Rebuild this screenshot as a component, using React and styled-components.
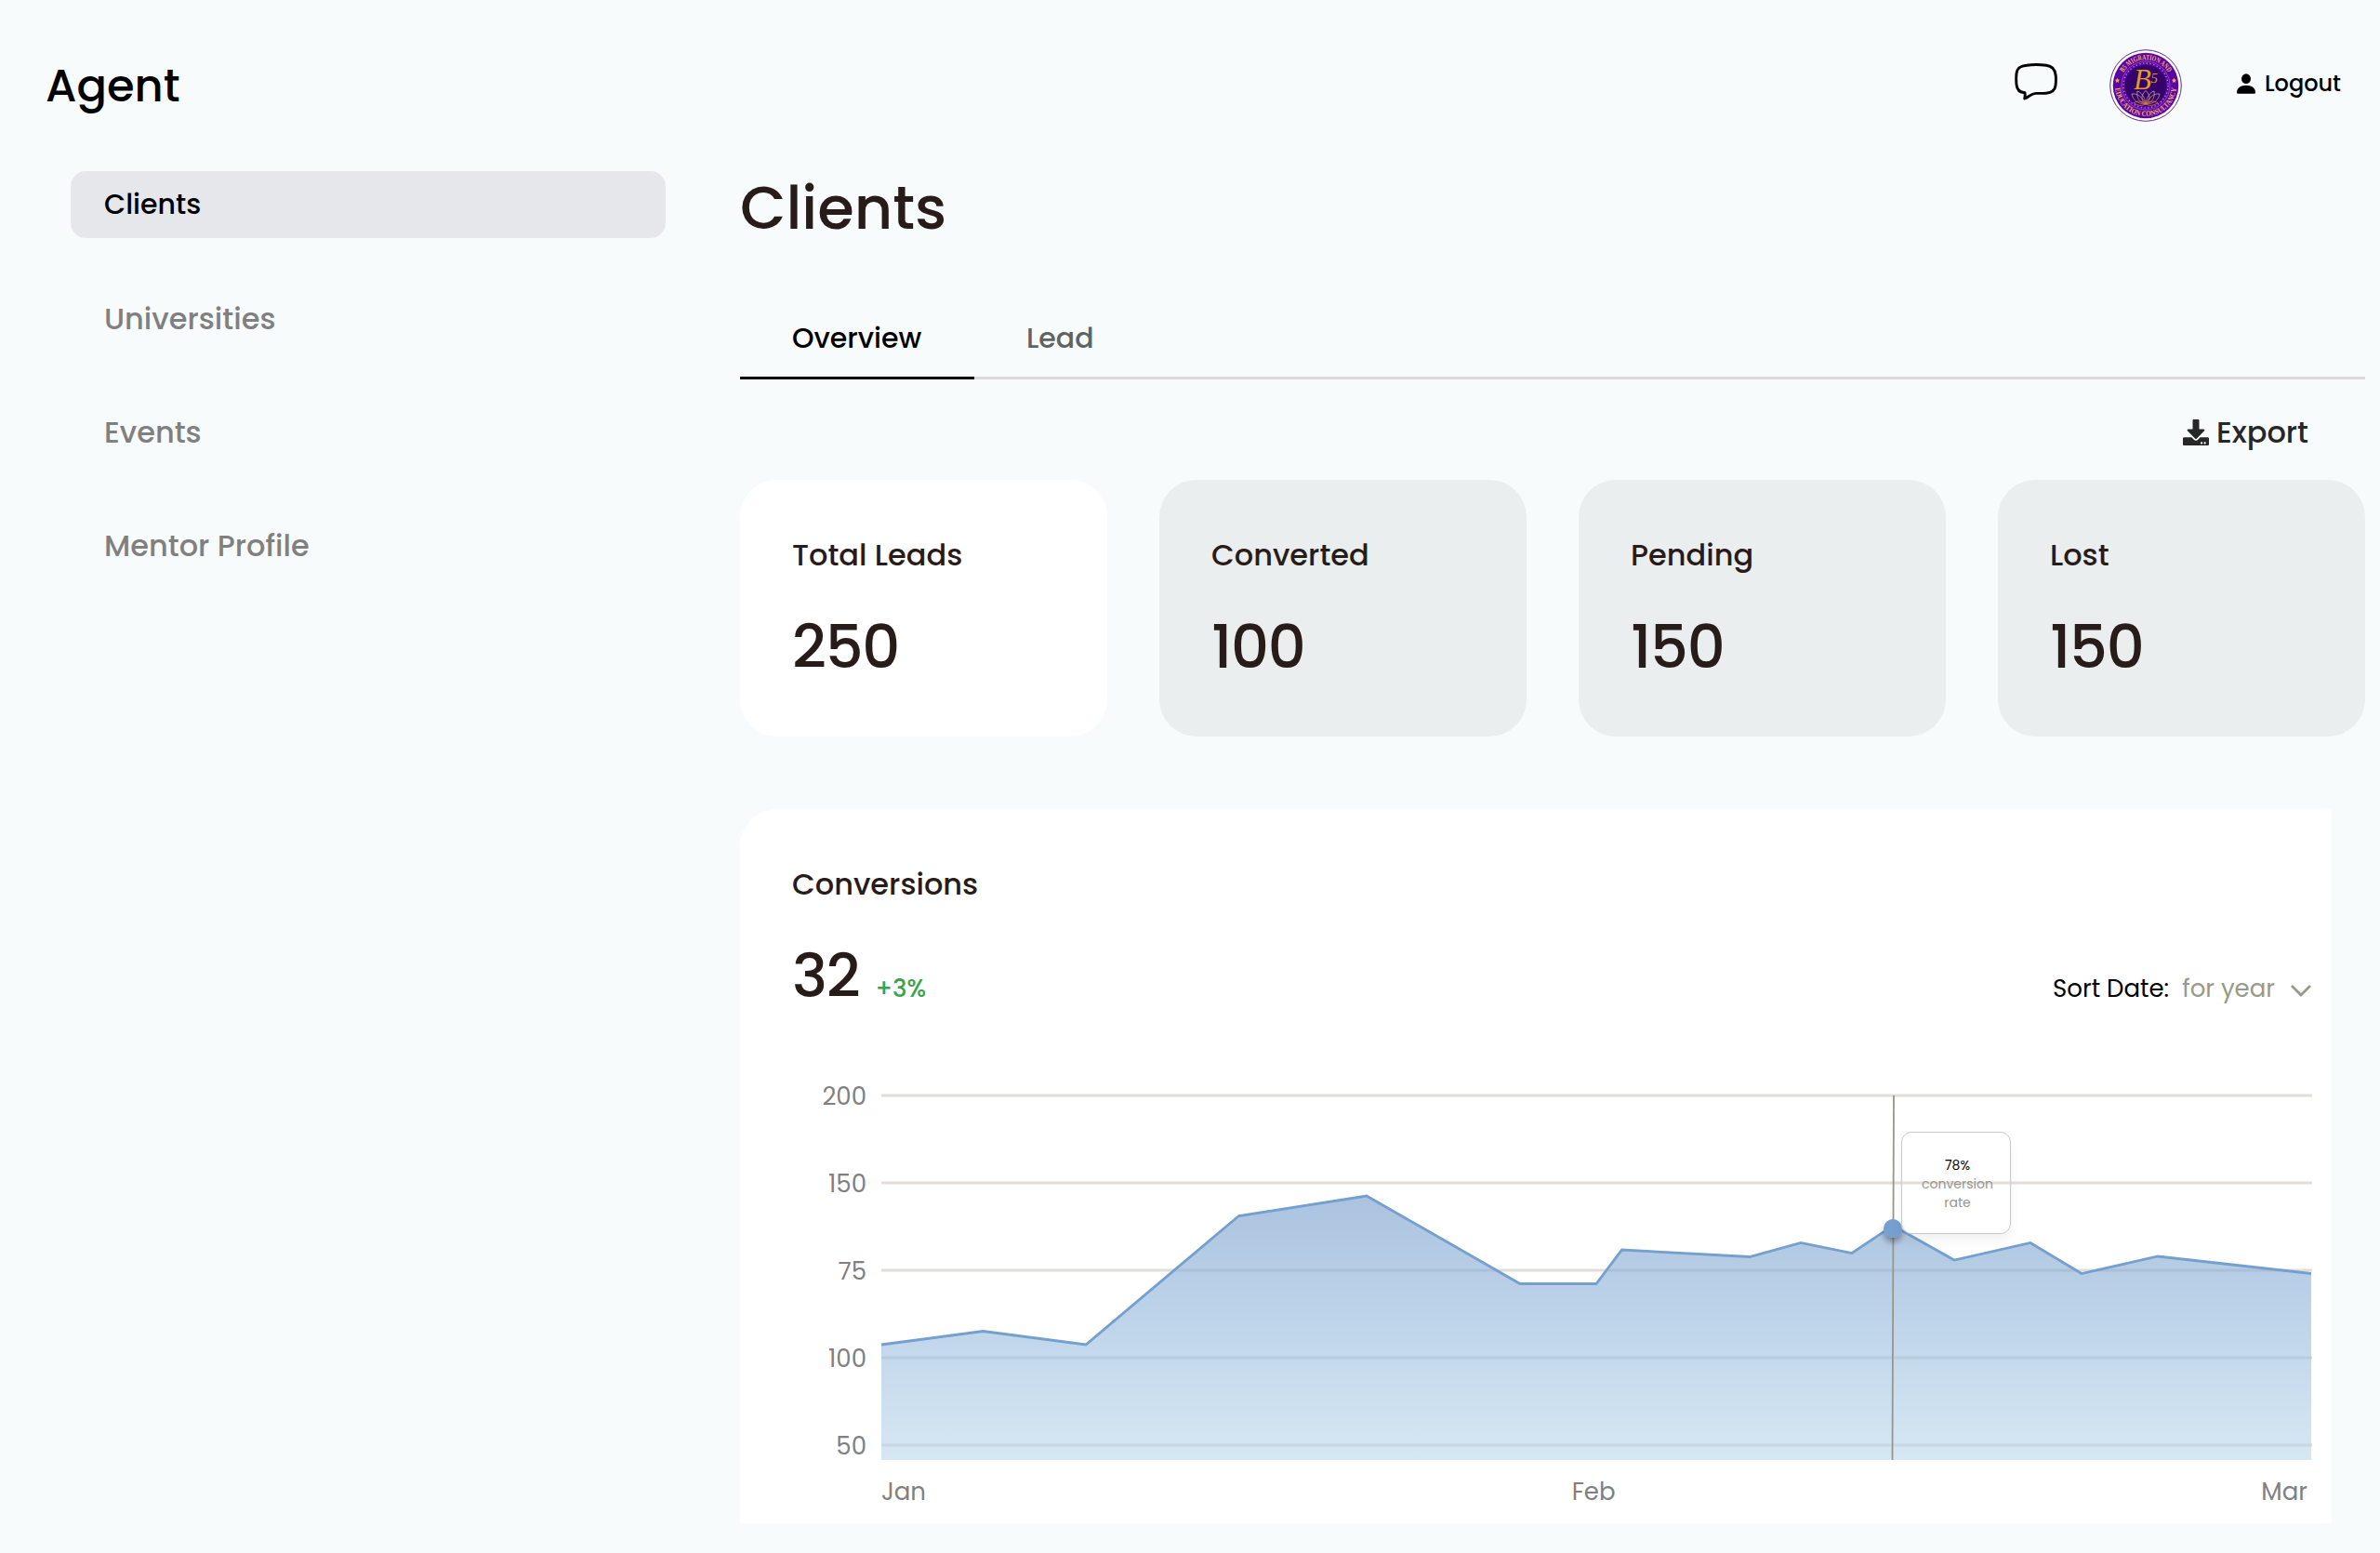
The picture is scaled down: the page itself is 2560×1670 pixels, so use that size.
import React from "react";
import styled, { createGlobalStyle } from "styled-components";
import { FaDownload } from "react-icons/fa";

const GlobalStyle = createGlobalStyle`
  *, *::before, *::after { box-sizing: border-box; }
  body {
    margin: 0;
    background: #f8fbfc;
    color: #000;
    font-family: Poppins, Inter, "Open Sans", sans-serif;
  }
`;

const Page = styled.div`
  min-height: 1670px;
  width: 2560px;
  overflow: hidden;
`;

const Text = styled.span`
  display: block;
  margin: 0;
  white-space: nowrap;
  font-size: ${(p) => p.$size}px;
  font-weight: ${(p) => p.$weight || 500};
  line-height: ${(p) => p.$line || 48}px;
  letter-spacing: ${(p) => p.$track || 0};
  color: ${(p) => p.$color || "#281c1a"};
`;

const Header = styled.header`
  display: flex;
  align-items: center;
  justify-content: space-between;
  height: 184px;
  padding: 0 42px 0 49px;
`;

const Brand = styled.div`
  padding-top: 2px;
`;

const Actions = styled.div`
  display: flex;
  align-items: center;
`;

const ChatButton = styled.button`
  display: flex;
  padding: 0;
  border: 0;
  background: none;
  margin: 0 56px 8px 0;
`;

const Avatar = styled.div`
  width: 78px;
  height: 78px;
  display: flex;
`;

const Logout = styled.button`
  display: flex;
  align-items: center;
  gap: 10px;
  padding: 0;
  border: 0;
  background: none;
  font: inherit;
  margin: 0 0 4px 59px;
`;

const Body = styled.div`
  display: grid;
  grid-template-columns: 640px 1748px;
  column-gap: 80px;
  padding-left: 76px;
`;

const Nav = styled.nav`
  display: flex;
  flex-direction: column;
  gap: 50px;
`;

const NavItem = styled.a`
  display: flex;
  align-items: center;
  height: 72px;
  padding: ${(p) => (p.$active ? 0 : 2)}px 0 0 36px;
  border-radius: 16px;
  background: ${(p) => (p.$active ? "#e5e7eb" : "transparent")};
`;

const Main = styled.main`
  display: flex;
  flex-direction: column;
`;

const Tabs = styled.div`
  display: flex;
  margin-top: 59px;
  height: 86px;
  box-shadow: inset 0 -3px 0 #dbd9da;
`;

const Tab = styled.div`
  display: flex;
  align-items: center;
  width: ${(p) => p.$width}px;
  padding: 0 0 0 56px;
  border-bottom: 3px solid ${(p) => (p.$active ? "#000" : "transparent")};
`;

const ExportRow = styled.div`
  display: flex;
  align-items: center;
  justify-content: flex-end;
  gap: 8px;
  height: 108px;
  padding: 5px 61px 0 0;
`;

const Cards = styled.section`
  display: grid;
  grid-template-columns: repeat(4, 1fr);
  column-gap: 56px;
`;

const Card = styled.article`
  height: 276px;
  padding: 57px 0 0 56px;
  border-radius: 40px;
  background: ${(p) => (p.$active ? "#fff" : "#ebeeef")};
`;

const Value = styled.div`
  margin-top: 27px;
`;

const ChartCard = styled.section`
  width: 1712px;
  height: 768px;
  margin-top: 78px;
  padding: 57px 21px 0 56px;
  border-radius: 40px 0 0 0;
  background: #fff;
`;

const Summary = styled.div`
  display: flex;
  align-items: baseline;
  margin-top: 27px;
`;

const Delta = styled.div`
  margin-left: 17px;
`;

const Sort = styled.div`
  display: flex;
  align-items: baseline;
  gap: 14px;
  margin-left: auto;
`;

const Chevron = styled.svg`
  margin-left: 2px;
`;

const Chart = styled.div`
  display: flex;
  margin-top: 60px;
`;

const YAxis = styled.div`
  display: flex;
  flex-direction: column;
  align-items: flex-end;
  gap: 54px;
  width: 80px;
  padding-top: 1px;
  margin-right: 16px;
`;

const Plot = styled.div`
  position: relative;
  width: 1539px;
`;

const Tooltip = styled.div`
  position: absolute;
  left: 1097px;
  top: 59px;
  width: 118px;
  height: 110px;
  padding: 25px 0 0 3px;
  display: flex;
  flex-direction: column;
  align-items: center;
  border: 1px solid #c9c9c9;
  border-radius: 11px;
  box-shadow: 0 8px 12px rgba(0, 0, 0, 0.05);
`;

const XAxis = styled.div`
  display: flex;
  justify-content: space-between;
  margin: 11px 5px 0 96px;
`;

const NAV = [
  { label: "Clients", size: 30, active: true },
  { label: "Universities", size: 32 },
  { label: "Events", size: 32 },
  { label: "Mentor Profile", size: 32 },
];

const CARDS = [
  { label: "Total Leads", value: "250", active: true },
  { label: "Converted", value: "100" },
  { label: "Pending", value: "150" },
  { label: "Lost", value: "150" },
];

const TICKS = ["200", "150", "75", "100", "50"];

const MONTHS = ["Jan", "Feb", "Mar"];

const POINTS = [
  [0, 288], [109.5, 273.5], [220, 288], [384.5, 149.5], [522, 128],
  [687, 222.5], [769, 222.5], [796.5, 186], [934, 193.5], [989, 178.5],
  [1044, 189.5], [1088, 160], [1154, 197], [1236, 178.5], [1291, 211.5],
  [1373, 193], [1538, 211.5],
];

const line = POINTS.map((p) => p.join(",")).join(" ");

function ChatIcon() {
  return (
    <svg width="46" height="40" viewBox="0 0 46 40" fill="none" stroke="#000" strokeWidth="2.9" strokeLinejoin="round">
      <path d="M13 2.2C18 1.5 28 1.5 34 2.2C40 2.8 43.6 7 44.2 13C44.6 17 44.5 20 44 24C43.3 29.500 40 31.700 34 32.200C30 32.500 27 32.400 23 32.400C17.500 32.600 15.500 36 10.700 38C11.300 35.500 11.300 34 11 31.800C5.500 31.500 2.500 28.500 2 23C1.600 19 1.600 15 2 11C2.600 5 6 2.800 13 2.200Z" />
    </svg>
  );
}

function UserIcon() {
  return (
    <svg width="20" height="22" viewBox="0 0 20 22" fill="#000">
      <ellipse cx="10" cy="5.700" rx="5" ry="5.400" />
      <path d="M0 20.500C0 15.500 4 12.700 10 12.700S20 15.500 20 20.500Q20 21.700 18.700 21.700H1.300Q0 21.700 0 20.500Z" />
    </svg>
  );
}

function Seal() {
  return (
    <svg width="78" height="78" viewBox="-39 -39 78 78">
      <defs>
        <path id="sealTop" d="M-27.800 0A27.800 27.800 0 0 1 27.800 0" />
        <path id="sealBottom" d="M-33 0A33 33 0 0 0 33 0" />
        <linearGradient id="sealGold" x1="0" y1="5" x2="0" y2="20" gradientUnits="userSpaceOnUse">
          <stop offset="0" stopColor="#c3b4cb" />
          <stop offset="1" stopColor="#cc7b45" />
        </linearGradient>
      </defs>
      <circle r="38.300" fill="#fff" stroke="#6021ab" strokeWidth="1" />
      <circle r="35.300" fill="#5a04a6" />
      <circle r="26" fill="none" stroke="#a765a0" strokeWidth="0.700" />
      <circle r="24" fill="none" stroke="#b98fd0" strokeWidth="1.300" strokeDasharray="1.300 2.470" />
      <circle r="22.300" fill="#340268" />
      <g fill="#f1ad68" fontFamily="'Liberation Serif', serif" fontWeight="700" fontSize="8.2" textAnchor="middle">
        <text textLength="58" lengthAdjust="spacingAndGlyphs">
          <textPath href="#sealTop" startOffset="50%">B5 MIGRATION AND</textPath>
        </text>
        <text textLength="98" lengthAdjust="spacingAndGlyphs">
          <textPath href="#sealBottom" startOffset="50%">EDUCATION CONSULTANCY</textPath>
        </text>
      </g>
      <g fill="#f5a93c">
        <path d="M-30.500 -8.300l.8 1.800 1.900.2-1.400 1.300.4 1.900-1.700-1-1.700 1 .4-1.900-1.400-1.300 1.900-.2z" />
        <path d="M30.500 -8.300l.8 1.800 1.900.2-1.400 1.300.4 1.900-1.700-1-1.700 1 .4-1.900-1.400-1.300 1.900-.2z" />
      </g>
      <text x="-13" y="4" fill="#dd9a2e" fontFamily="'Liberation Serif', serif" fontStyle="italic" fontSize="31">
        B<tspan dx="-0.500" dy="-7" fontSize="15">5</tspan>
      </text>
      <g fill="none" stroke="url(#sealGold)" strokeWidth="0.800">
        <path d="M0 20C-6 16-5 10 0 5.500C5 10 6 16 0 20Z" />
        <path d="M0 20C-8 18-10 12-9 6C-5 7-1 12 0 20C1 12 5 7 9 6C10 12 8 18 0 20Z" />
        <path d="M0 20C-9 20-14 15-15 9C-9 8-3 13 0 20C3 13 9 8 15 9C14 15 9 20 0 20Z" />
        <path d="M-13 18.500C-8 16-3 17 0 20C3 17 8 16 13 18.500C8 22 4 22 0 20C-4 22-8 22-13 18.500Z" />
      </g>
    </svg>
  );
}

function AreaPlot() {
  return (
    <svg width="1539" height="416" viewBox="0 0 1539 416" overflow="visible" display="block">
      <defs>
        <linearGradient id="area" x1="0" y1="128" x2="0" y2="412" gradientUnits="userSpaceOnUse">
          <stop offset="0" stopColor="#739bca" />
          <stop offset="0.500" stopColor="#95b9dd" />
          <stop offset="1" stopColor="#bbd8ea" />
        </linearGradient>
        <filter id="dotShadow" x="-50%" y="-50%" width="200%" height="220%">
          <feDropShadow dx="0" dy="5" stdDeviation="3" floodColor="#000" floodOpacity="0.35" />
        </filter>
      </defs>
      {[20, 114, 208, 302, 396].map((y) => (
        <line key={y} x1="0" x2="1539" y1={y} y2={y} stroke="#e2dddb" strokeWidth="3" />
      ))}
      <polygon points={`${line} 1538,412 0,412`} fill="url(#area)" fillOpacity="0.6" />
      <polyline points={line} fill="none" stroke="#759fcf" strokeWidth="2.800" />
      <line x1="1089" y1="20" x2="1087.500" y2="412" stroke="#98958c" strokeWidth="1.800" />
      <circle cx="1088" cy="163" r="10" fill="#759fcf" filter="url(#dotShadow)" />
    </svg>
  );
}

export default function App() {
  return (
    <Page>
      <GlobalStyle />
      <Header>
        <Brand><Text $size={48} $line={72} $color="#000">Agent</Text></Brand>
        <Actions>
          <ChatButton aria-label="Messages"><ChatIcon /></ChatButton>
          <Avatar><Seal /></Avatar>
          <Logout>
            <UserIcon />
            <Text $size={24} $line={36} $color="#000">Logout</Text>
          </Logout>
        </Actions>
      </Header>
      <Body>
        <Nav>
          {NAV.map((n) => (
            <NavItem key={n.label} $active={n.active}>
              <Text $size={n.size} $color={n.active ? "#000" : "#808080"}>{n.label}</Text>
            </NavItem>
          ))}
        </Nav>
        <Main>
          <Text $size={64} $line={79}>Clients</Text>
          <Tabs>
            <Tab $active $width={252}><Text $size={30} $color="#000">Overview</Text></Tab>
            <Tab $width={182}><Text $size={30} $color="#606263">Lead</Text></Tab>
          </Tabs>
          <ExportRow>
            <FaDownload size={28} color="#272727" />
            <Text $size={32} $color="#272727">Export</Text>
          </ExportRow>
          <Cards>
            {CARDS.map((c) => (
              <Card key={c.label} $active={c.active}>
                <Text $size={32}>{c.label}</Text>
                <Value><Text $size={64} $line={96} $track="-0.02em">{c.value}</Text></Value>
              </Card>
            ))}
          </Cards>
          <ChartCard>
            <Text $size={32}>Conversions</Text>
            <Summary>
              <Text $size={64} $line={96} $track="-0.02em">32</Text>
              <Delta><Text $size={26} $color="#3aa34c">+3%</Text></Delta>
              <Sort>
                <Text $size={26} $weight={400} $color="#000">Sort Date:</Text>
                <Text $size={26} $weight={400} $color="#98998a">for year</Text>
                <Chevron width="24" height="14" viewBox="0 0 24 14" fill="none" stroke="#98998a" strokeWidth="2.800">
                  <path d="M2 2L12 12L22 2" />
                </Chevron>
              </Sort>
            </Summary>
            <Chart>
              <YAxis>
                {TICKS.map((t) => (
                  <Text key={t} $size={26} $weight={400} $line={40} $color="#808080">{t}</Text>
                ))}
              </YAxis>
              <Plot>
                <AreaPlot />
                <Tooltip>
                  <Text $size={14} $weight={400} $line={20} $color="#000">78%</Text>
                  <Text $size={14} $weight={400} $line={20} $color="#98958c">conversion</Text>
                  <Text $size={14} $weight={400} $line={20} $color="#98958c">rate</Text>
                </Tooltip>
              </Plot>
            </Chart>
            <XAxis>
              {MONTHS.map((m) => (
                <Text key={m} $size={26} $weight={400} $line={36} $color="#808080">{m}</Text>
              ))}
            </XAxis>
          </ChartCard>
        </Main>
      </Body>
    </Page>
  );
}
